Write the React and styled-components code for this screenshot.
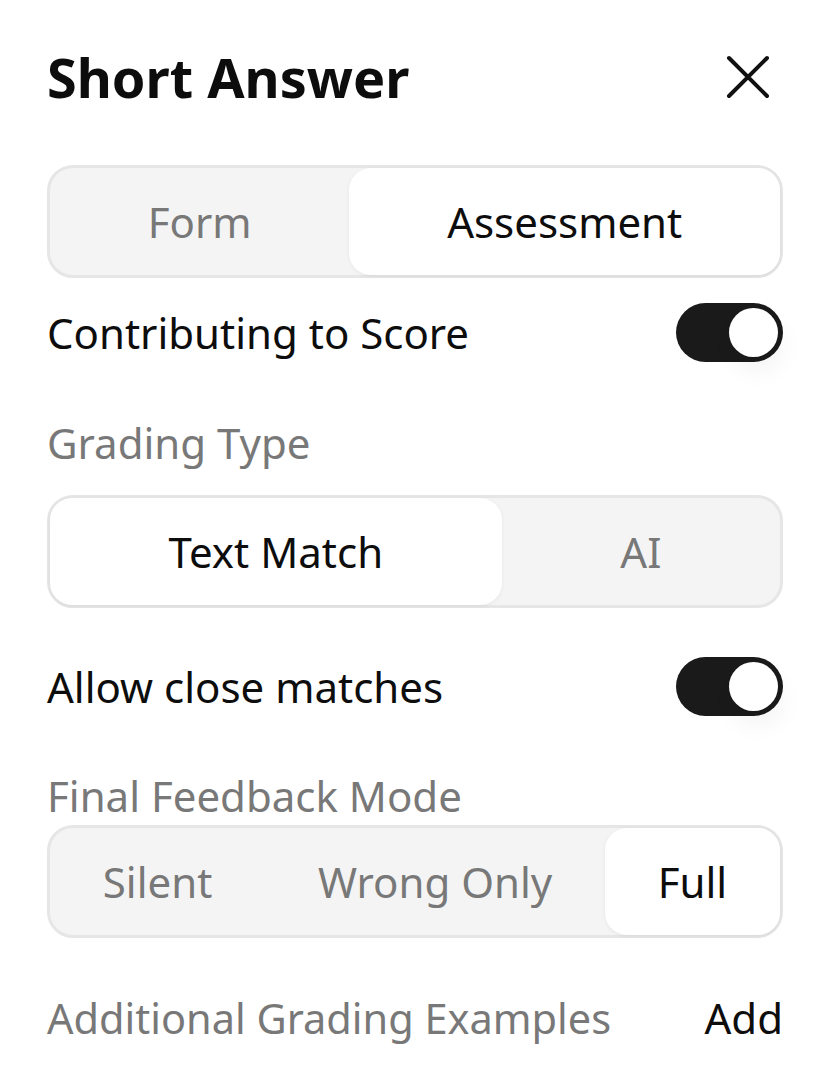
import React, { useState } from "react";
import styled, { createGlobalStyle } from "styled-components";

const Global = createGlobalStyle`
  html, body { margin: 0; padding: 0; background: #ffffff; }
  body { font-family: "Noto Sans", "Open Sans", sans-serif; color: #111111; }
  * { box-sizing: border-box; }
`;

const Panel = styled.div`
  width: 829px;
  padding: 40px 46px 40px 47px;
  display: flex;
  flex-direction: column;
`;

const Header = styled.div`
  display: flex;
  align-items: center;
  justify-content: space-between;
  height: 74px;
`;

const Title = styled.h1`
  margin: 0;
  font-size: 54px;
  font-weight: 700;
  line-height: 74px;
  color: #0d0d0d;
`;

const CloseButton = styled.button`
  border: 0;
  background: none;
  padding: 0;
  width: 44px;
  height: 44px;
  margin-right: 13px;
  display: flex;
  align-items: center;
  justify-content: center;
  cursor: pointer;
`;

const Segmented = styled.div`
  display: flex;
  height: 113px;
  margin-top: ${(p) => p.$mt}px;
  border: 3px solid #e6e6e6;
  border-radius: 26px;
  background: #f4f4f4;
`;

const Segment = styled.button`
  flex: 1 1 auto;
  border: 0;
  margin: 0;
  padding: 0 4px;
  border-radius: 22px;
  font-family: inherit;
  font-size: 42px;
  font-weight: 400;
  color: ${(p) => (p.$active ? "#0d0d0d" : "#787878")};
  background: ${(p) => (p.$active ? "#ffffff" : "transparent")};
  box-shadow: ${(p) => (p.$active ? "0 1px 4px rgba(0,0,0,0.06)" : "none")};
  cursor: pointer;
`;

const Row = styled.div`
  display: flex;
  align-items: center;
  justify-content: space-between;
  margin-top: ${(p) => p.$mt}px;
  min-height: ${(p) => p.$h || 56}px;
`;

const RowText = styled.span`
  font-size: 42px;
  line-height: 56px;
  color: #0d0d0d;
`;

const Label = styled.div`
  font-size: 42px;
  line-height: 56px;
  color: #787878;
  margin-top: ${(p) => p.$mt}px;
`;

const LabelInline = styled.span`
  font-size: 41.5px;
  line-height: 56px;
  color: #787878;
`;

const AddButton = styled.button`
  border: 0;
  background: none;
  padding: 0;
  font-family: inherit;
  font-size: 42px;
  line-height: 56px;
  color: #0d0d0d;
  cursor: pointer;
`;

const Track = styled.button`
  position: relative;
  width: 107px;
  height: 59px;
  border: 0;
  padding: 0;
  border-radius: 30px;
  background: ${(p) => (p.$on ? "#1a1a1a" : "#d0d0d0")};
  cursor: pointer;
`;

const Knob = styled.span`
  position: absolute;
  top: 5px;
  left: ${(p) => (p.$on ? "53px" : "5px")};
  width: 49px;
  height: 49px;
  border-radius: 50%;
  background: #ffffff;
  box-shadow: 4px 14px 24px rgba(0, 0, 0, 0.05);
`;

function Toggle({ on, onClick }) {
  return (
    <Track $on={on} onClick={onClick}>
      <Knob $on={on} />
    </Track>
  );
}

function SegmentedControl({ options, value, onChange, mt }) {
  return (
    <Segmented $mt={mt}>
      {options.map((o) => (
        <Segment key={o} $active={o === value} onClick={() => onChange(o)}>
          {o}
        </Segment>
      ))}
    </Segmented>
  );
}

export default function App() {
  const [tab, setTab] = useState("Assessment");
  const [score, setScore] = useState(true);
  const [grading, setGrading] = useState("Text Match");
  const [close, setClose] = useState(true);
  const [mode, setMode] = useState("Full");

  return (
    <>
      <Global />
      <Panel>
        <Header>
          <Title>Short Answer</Title>
          <CloseButton aria-label="Close">
            <svg width="44" height="44" viewBox="0 0 44 44" fill="none">
              <path
                d="M3 3L41 41M41 3L3 41"
                stroke="#111"
                strokeWidth="4"
                strokeLinecap="round"
              />
            </svg>
          </CloseButton>
        </Header>

        <SegmentedControl
          mt={51}
          options={["Form", "Assessment"]}
          value={tab}
          onChange={setTab}
        />

        <Row $mt={25} $h={59}>
          <RowText>Contributing to Score</RowText>
          <Toggle on={score} onClick={() => setScore(!score)} />
        </Row>

        <Label $mt={53}>Grading Type</Label>
        <SegmentedControl
          mt={24}
          options={["Text Match", "AI"]}
          value={grading}
          onChange={setGrading}
        />

        <Row $mt={49} $h={59}>
          <RowText>Allow close matches</RowText>
          <Toggle on={close} onClick={() => setClose(!close)} />
        </Row>

        <Label $mt={52}>Final Feedback Mode</Label>
        <SegmentedControl
          mt={1}
          options={["Silent", "Wrong Only", "Full"]}
          value={mode}
          onChange={setMode}
        />

        <Row $mt={52}>
          <LabelInline>Additional Grading Examples</LabelInline>
          <AddButton>Add</AddButton>
        </Row>
      </Panel>
    </>
  );
}
